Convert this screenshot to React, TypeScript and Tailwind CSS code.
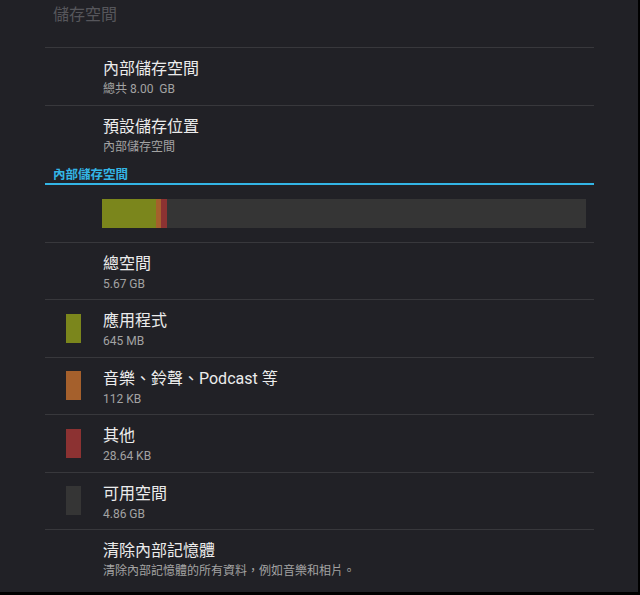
import React from "react";

const font = { fontFamily: "Roboto, 'Noto Sans CJK TC', 'Noto Sans', sans-serif" };

function Row({
  title,
  sub,
  swatch,
  last,
}: {
  title: string;
  sub: string;
  swatch?: string;
  last?: boolean;
}) {
  return (
    <div className={`relative flex h-[57.4px] ${last ? "" : "border-b border-[#38383c]"}`}>
      <div className="flex w-[58px] shrink-0 items-center pl-[21px]">
        {swatch ? <div className={`h-[29px] w-[15px] ${swatch}`} /> : null}
      </div>
      <div className="flex flex-col pt-[11px]">
        <div className="text-[16px] leading-[20px] text-[#ececec]">{title}</div>
        <div className="mt-[2px] text-[12px] leading-[16px] text-[#a3a3a3]">{sub}</div>
      </div>
    </div>
  );
}

export default function App() {
  return (
    <div className="h-[595px] w-[640px] bg-black" style={font}>
      <div className="h-[592px] w-[638px] overflow-hidden bg-[#212126]">
        <div className="h-[47px] pl-[53px] pt-[5px] text-[16px] leading-[20px] text-[#56565b]">
          儲存空間
        </div>
        <div className="mx-[45px] w-[549px]">
          <div className="border-t border-[#38383c]" />
          <div className="flex h-[58px] border-b border-[#38383c]">
            <div className="w-[58px] shrink-0" />
            <div className="flex flex-col pt-[11px]">
              <div className="text-[16px] leading-[20px] text-[#ececec]">內部儲存空間</div>
              <div className="mt-[2px] text-[12px] leading-[16px] text-[#a3a3a3]">
                總共 8.00&nbsp;&nbsp;GB
              </div>
            </div>
          </div>
          <div className="flex h-[60px]">
            <div className="w-[58px] shrink-0" />
            <div className="flex flex-col pt-[11px]">
              <div className="text-[16px] leading-[20px] text-[#ececec]">預設儲存位置</div>
              <div className="mt-[2px] text-[12px] leading-[16px] text-[#a3a3a3]">內部儲存空間</div>
            </div>
          </div>
          <div className="border-b-2 border-[#33b5e5] pl-[8px] text-[12.5px] font-bold leading-[17px] text-[#33b5e5]">
            內部儲存空間
          </div>
          <div className="h-[58px] border-b border-[#38383c] pl-[57px] pr-[8px] pt-[14px]">
            <div className="flex h-[29px] w-full bg-[#353535]">
              <div className="h-full w-[54px] bg-[#7b861c]" />
              <div className="h-full w-[5px] bg-[#a5602c]" />
              <div className="h-full w-[6px] bg-[#8c3232]" />
            </div>
          </div>
          <Row title="總空間" sub="5.67 GB" />
          <Row title="應用程式" sub="645 MB" swatch="bg-[#7b861c]" />
          <Row title="音樂、鈴聲、Podcast 等" sub="112 KB" swatch="bg-[#a5602c]" />
          <Row title="其他" sub="28.64 KB" swatch="bg-[#8c3232]" />
          <Row title="可用空間" sub="4.86 GB" swatch="bg-[#353535]" />
          <Row title="清除內部記憶體" sub="清除內部記憶體的所有資料，例如音樂和相片。" last />
        </div>
      </div>
    </div>
  );
}
